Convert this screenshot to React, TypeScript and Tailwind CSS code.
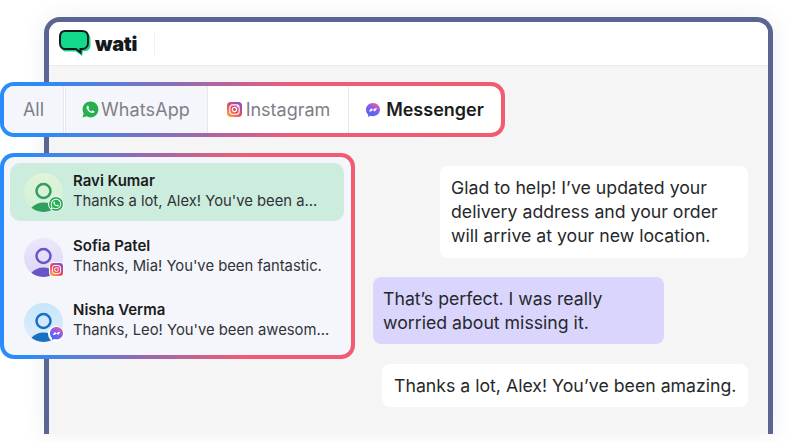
import React from 'react';
import { FaWhatsapp } from 'react-icons/fa';
import { RiWhatsappFill } from 'react-icons/ri';

const InstagramIcon = ({ size = 16 }: { size?: number }) => (
  <svg width={size} height={size} viewBox="0 0 16 16">
    <defs>
      <linearGradient id="ig" x1="0.1" y1="1" x2="0.9" y2="0">
        <stop offset="0" stopColor="#fdb03f" />
        <stop offset="0.45" stopColor="#ee4a5f" />
        <stop offset="1" stopColor="#7d4fd0" />
      </linearGradient>
    </defs>
    <rect width="16" height="16" rx="4" fill="url(#ig)" />
    <rect x="3" y="3" width="10" height="10" rx="3" fill="none" stroke="#fff" strokeWidth="1.2" />
    <circle cx="8" cy="8" r="2.3" fill="none" stroke="#fff" strokeWidth="1.2" />
    <circle cx="11" cy="5" r="0.7" fill="#fff" />
  </svg>
);

const MessengerIcon = ({ size = 14 }: { size?: number }) => (
  <svg width={size} height={size} viewBox="0 0 14 14">
    <defs>
      <linearGradient id="ms" x1="0.2" y1="1" x2="0.8" y2="0">
        <stop offset="0" stopColor="#3f6bf0" />
        <stop offset="0.6" stopColor="#8a5cf0" />
        <stop offset="1" stopColor="#f0608f" />
      </linearGradient>
    </defs>
    <path d="M7 0C3.1 0 0 2.9 0 6.7c0 2 .8 3.7 2.2 4.9V14l2.2-1.2c.8.3 1.7.4 2.6.4 3.9 0 7-2.9 7-6.6S10.900 0 7 0z" fill="url(#ms)" />
    <path d="M2.900 8.600 5.100 5.300l2 1.500 2-1.500 2 .0-2.200 3.200-2-1.500-2 1.500z" fill="#fff" />
  </svg>
);

const Avatar = ({ tone, from, to, badge }: { tone: string; from: string; to: string; badge: React.ReactNode }) => (
  <div className="relative w-[39px] h-[39px] shrink-0">
    <div className="w-full h-full rounded-full overflow-hidden" style={{ background: `linear-gradient(180deg, ${from}, ${to})` }}>
      <svg width="39" height="39" viewBox="0 0 39 39">
        <circle cx="19.500" cy="18" r="7" fill="none" stroke={tone} strokeWidth="2.500" />
        <path d="M7 35C11 31 15 29.500 19.500 29.500S28 31 32 35C28 39 24 41 19.500 41S11 39 7 35z" fill={tone} />
      </svg>
    </div>
    <div className="absolute -right-[1px] bottom-0">{badge}</div>
  </div>
);

const chats = [
  {
    name: 'Ravi Kumar',
    text: "Thanks a lot, Alex! You've been a...",
    tone: '#2f9e5f',
    from: '#e0f4d8',
    to: '#d2efd9',
    active: true,
    textPad: 'pb-[2px]',
    badge: (
      <div className="w-[16px] h-[16px] rounded-full bg-[#27ae55] border border-white flex items-center justify-center text-white">
        <FaWhatsapp size={12} />
      </div>
    ),
  },
  {
    name: 'Sofia Patel',
    text: "Thanks, Mia! You've been fantastic.",
    tone: '#6a55c8',
    from: '#ece8fb',
    to: '#dcd5f8',
    active: false,
    textPad: 'pb-[2px]',
    badge: (
      <div className="rounded-[4px] border border-white bg-white">
        <InstagramIcon size={13} />
      </div>
    ),
  },
  {
    name: 'Nisha Verma',
    text: "Thanks, Leo! You've been awesom...",
    tone: '#1a6fc4',
    from: '#c6e6fb',
    to: '#e0edfc',
    active: false,
    textPad: 'pb-[4px]',
    badge: (
      <div className="w-[16px] h-[16px] rounded-full bg-white flex items-center justify-center">
        <MessengerIcon size={13} />
      </div>
    ),
  },
];

const App: React.FC = () => {
  return (
    <div className="w-[790px] h-[442px] bg-white overflow-hidden pt-[17px] pl-[44px] font-['Inter',sans-serif] text-[#1f2328]">
      <div className="w-[729px] h-[417px] rounded-t-[16px] border-[5px] border-b-0 border-[#5a6691] bg-[#f5f5f5] flex flex-col shadow-[0_0_24px_rgba(40,50,90,0.08)]">
        {/* top bar */}
        <div className="h-[44px] shrink-0 bg-white rounded-t-[11px] border-b border-[#ececec] flex items-center pl-[10px]">
          <svg width="32" height="26" viewBox="0 0 32 26" className="mb-[1px]">
            <path d="M7 3H26C29 3 31.500 5 31.500 9V15C31.500 19 29 21 26 21H24L23 26L17 21.500H7C4 21.500 2 19 2 15V9C2 5 4 3 7 3z" fill="#12d98c" />
            <path d="M6 1H23C26.500 1 29 3 29 7V13C29 16.500 26.500 19 23 19H21.500L21.500 22.500L17 19H6C3 19 1 16.500 1 13V7C1 3 3 1 6 1z" fill="#12d98c" stroke="#15191c" strokeWidth="2" />
          </svg>
          <span className="ml-[4px] text-[20px] leading-[24px] font-black tracking-[-0.3px] text-[#15191c]">wati</span>
          <div className="ml-[17px] w-px h-[22px] bg-[#f0f0f0]" />
        </div>

        <div className="flex-1 min-h-0 flex flex-col">
          {/* channel tabs */}
          <div className="mt-[16px] -ml-[49px] w-[505px] h-[55px] rounded-[14px] p-[4px] bg-[linear-gradient(90deg,#2a8cfb_8%,#8d6cb4_35%,#ef5c76_58%,#f25a70_100%)]">
            <div className="h-full rounded-[10px] bg-white overflow-hidden flex text-[18px]">
              <div className="w-[60px] bg-[#f5f6fb] text-[#7d8086] flex items-center justify-center border-r border-[#e6e7ec]">All</div>
              <div className="ml-[1px] w-[143px] bg-[#f5f6fb] text-[#7d8086] flex items-center gap-[1px] pl-[15px] border-x border-[#e6e7ec]">
                <RiWhatsappFill size={19} className="text-[#25b04b]" />
                <span className="tracking-[0.1px]">WhatsApp</span>
              </div>
              <div className="ml-[1px] w-[140px] text-[#7d8086] flex items-center justify-center gap-[4px] border-r border-[#e6e7ec]">
                <InstagramIcon size={15} />
                Instagram
              </div>
              <div className="flex-1 font-semibold text-[#1a1c20] flex items-center justify-center gap-[6px]">
                <MessengerIcon size={14} />
                Messenger
              </div>
            </div>
          </div>

          <div className="mt-[16px] -ml-[49px] flex">
            {/* conversation list */}
            <div className="w-[355px] h-[206px] shrink-0 rounded-[14px] p-[4px] bg-[linear-gradient(90deg,#2a8cfb_8%,#8d6cb4_38%,#ef5c76_68%,#f25a70_100%)]">
              <div className="h-full rounded-[10px] bg-[#f5f6fb] pl-[6px] pr-[7px] pt-[6px] flex flex-col gap-[7px]">
                {chats.map((chat) => (
                  <div key={chat.name} className={`h-[58px] rounded-[10px] pl-[14px] flex items-center gap-[10px] ${chat.active ? 'bg-[#ccecdd]' : ''}`}>
                    <Avatar tone={chat.tone} from={chat.from} to={chat.to} badge={chat.badge} />
                    <div className={`leading-[21px] whitespace-nowrap ${chat.textPad}`}>
                      <div className="text-[15px] font-semibold text-[#1a1c20]">{chat.name}</div>
                      <div className="text-[14.8px] text-[#2f3338]">{chat.text}</div>
                    </div>
                  </div>
                ))}
              </div>
            </div>

            {/* messages */}
            <div className="ml-[18px] w-[375px] pt-[13px] flex flex-col items-end text-[17.7px] leading-[24px] text-[#26282c]">
              <div className="w-[308px] h-[92px] rounded-[8px] bg-white px-[11px] py-[10px]">
                Glad to help! I’ve updated your delivery address and your order will arrive at your new location.
              </div>
              <div className="mt-[19px] self-start w-[291px] h-[67px] rounded-[8px] bg-[#dad5fd] px-[10px] py-[10px]">
                That’s perfect. I was really<br />worried about missing it.
              </div>
              <div className="mt-[20px] w-[366px] h-[43px] rounded-[8px] bg-white pl-[12px] py-[10px] whitespace-nowrap">
                Thanks a lot, Alex! You’ve been amazing.
              </div>
            </div>
          </div>
        </div>
      </div>
    </div>
  );
};

export default App;
